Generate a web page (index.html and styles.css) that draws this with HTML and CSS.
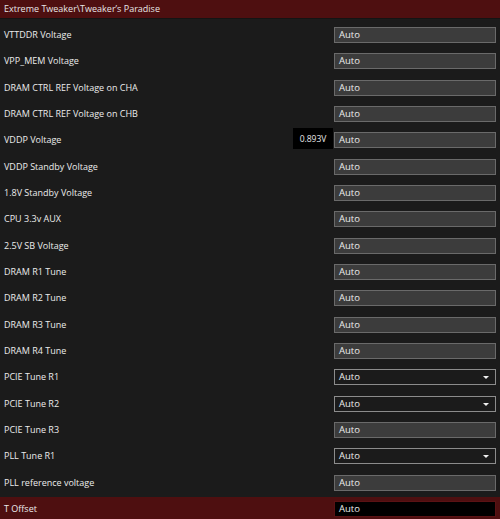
FILE: index.html
```html
<!DOCTYPE html>
<html>
<head>
<meta charset="utf-8">
<link rel="stylesheet" href="styles.css">
</head>
<body>
<div class="page">
  <div class="header">Extreme Tweaker\Tweaker’s Paradise</div>
  <div class="list">
    <div class="row"><span class="label">VTTDDR Voltage</span><div class="field">Auto</div></div>
    <div class="row"><span class="label">VPP_MEM Voltage</span><div class="field">Auto</div></div>
    <div class="row"><span class="label">DRAM CTRL REF Voltage on CHA</span><div class="field">Auto</div></div>
    <div class="row"><span class="label">DRAM CTRL REF Voltage on CHB</span><div class="field">Auto</div></div>
    <div class="row"><span class="label">VDDP Voltage</span><div class="field">Auto</div><span class="tip">0.893V</span></div>
    <div class="row"><span class="label">VDDP Standby Voltage</span><div class="field">Auto</div></div>
    <div class="row"><span class="label">1.8V Standby Voltage</span><div class="field">Auto</div></div>
    <div class="row"><span class="label">CPU 3.3v AUX</span><div class="field">Auto</div></div>
    <div class="row"><span class="label">2.5V SB Voltage</span><div class="field">Auto</div></div>
    <div class="row"><span class="label">DRAM R1 Tune</span><div class="field">Auto</div></div>
    <div class="row"><span class="label">DRAM R2 Tune</span><div class="field">Auto</div></div>
    <div class="row"><span class="label">DRAM R3 Tune</span><div class="field">Auto</div></div>
    <div class="row"><span class="label">DRAM R4 Tune</span><div class="field">Auto</div></div>
    <div class="row"><span class="label">PCIE Tune R1</span><div class="field select">Auto<span class="caret"></span></div></div>
    <div class="row"><span class="label">PCIE Tune R2</span><div class="field select">Auto<span class="caret"></span></div></div>
    <div class="row"><span class="label">PCIE Tune R3</span><div class="field">Auto</div></div>
    <div class="row"><span class="label">PLL Tune R1</span><div class="field select">Auto<span class="caret"></span></div></div>
    <div class="row"><span class="label">PLL reference voltage</span><div class="field">Auto</div></div>
    <div class="row active"><span class="label">T Offset</span><div class="field edit">Auto</div></div>
  </div>
</div>
</body>
</html>
```
FILE: styles.css
```css
html, body {
  margin: 0;
  padding: 0;
  background: #1b1b1b;
}
body {
  width: 500px;
  height: 519px;
  overflow: hidden;
  font-family: "Open Sans", "DejaVu Sans", sans-serif;
  color: #ececec;
}
.page {
  display: flex;
  flex-direction: column;
}
.header {
  height: 19px;
  line-height: 18px;
  background: #4e0f10;
  padding-left: 4px;
  font-size: 9px;
  color: #e6e6e6;
  border-bottom: 1px solid #141414;
  box-sizing: border-box;
}
.list {
  display: flex;
  flex-direction: column;
  padding-top: 4px;
}
.row {
  position: relative;
  height: 26.33px;
  display: flex;
  align-items: flex-start;
  justify-content: space-between;
  padding: 4px 4px 0 4px;
  box-sizing: border-box;
}
.label {
  font-size: 9px;
  line-height: 15px;
  color: #ececec;
}
.field {
  position: relative;
  width: 162px;
  height: 16px;
  box-sizing: border-box;
  background: #3c3c3c;
  border: 1px solid #6a6a6a;
  font-size: 9.5px;
  line-height: 13px;
  padding-left: 4px;
  color: #ececec;
}
.field.select {
  background: #1b1b1b;
  border-color: #8c8c8c;
}
.caret {
  position: absolute;
  right: 6px;
  top: 6px;
  width: 0;
  height: 0;
  border-left: 3px solid transparent;
  border-right: 3px solid transparent;
  border-top: 3px solid #f0f0f0;
}
.row.active {
  background: #4e0f10;
}
.field.edit {
  background: #000;
  border-color: #5a1214;
}
.tip {
  position: absolute;
  left: 293px;
  top: 0px;
  width: 40px;
  height: 21px;
  background: #000;
  color: #e8e8e8;
  font-size: 8.5px;
  line-height: 21px;
  text-align: center;
}
```
